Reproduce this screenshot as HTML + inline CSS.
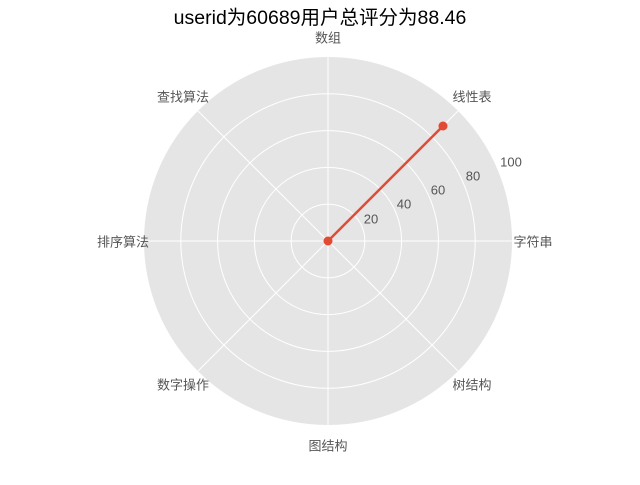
<!DOCTYPE html>
<html><head><meta charset="utf-8"><style>
html,body{margin:0;padding:0;background:#fff;}
svg text{font-family:"Liberation Sans","Noto Sans CJK SC",sans-serif;}
</style></head><body>
<svg width="640" height="480" viewBox="0 0 640 480" xmlns="http://www.w3.org/2000/svg">
<rect width="640" height="480" fill="#fff"/>
<circle cx="328" cy="241" r="184" fill="#e5e5e5"/>
<g stroke="#fff" stroke-width="1" fill="none">
<circle cx="328" cy="241" r="36.8"/>
<circle cx="328" cy="241" r="73.6"/>
<circle cx="328" cy="241" r="110.4"/>
<circle cx="328" cy="241" r="147.2"/>
<line x1="328" y1="57" x2="328" y2="425"/>
<line x1="144" y1="241" x2="512" y2="241"/>
<line x1="198" y1="111" x2="458" y2="371"/>
<line x1="458" y1="111" x2="198" y2="371"/>
</g>
<line x1="328" y1="241" x2="443" y2="126" stroke="#e24a33" stroke-width="2.5"/>
<circle cx="328" cy="241" r="4.5" fill="#e24a33"/>
<circle cx="443" cy="126" r="4.5" fill="#e24a33"/>
<g font-size="13" fill="#555" text-anchor="middle" dominant-baseline="central">
<text x="328" y="38">数组</text>
<text x="472" y="97">线性表</text>
<text x="533" y="242">字符串</text>
<text x="472" y="385">树结构</text>
<text x="328" y="446">图结构</text>
<text x="183" y="385">数字操作</text>
<text x="123" y="242">排序算法</text>
<text x="183" y="97">查找算法</text>
<text x="371" y="219">20</text>
<text x="404" y="204">40</text>
<text x="438" y="190">60</text>
<text x="473" y="176">80</text>
<text x="511" y="162">100</text>
</g>
<text x="320" y="18" font-size="19.5" fill="#000" text-anchor="middle" dominant-baseline="central">userid为60689用户总评分为88.46</text>
</svg>
</body></html>
